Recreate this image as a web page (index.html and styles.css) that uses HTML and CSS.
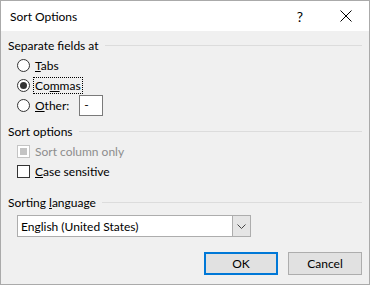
FILE: index.html
```html
<!DOCTYPE html>
<html lang="en">
<head>
    <meta charset="UTF-8">
    <title>Sort Options</title>
    <link rel="stylesheet" href="styles.css">
</head>
<body>
    <div class="window">
        <div class="titlebar">
            <span class="title">Sort Options</span>
            <div class="capbtn">?</div>
            <div class="capbtn">
                <svg width="12" height="12" viewBox="0 0 12 12">
                    <path d="M0.5 0.5 L11.5 11.5 M11.5 0.5 L0.5 11.5" stroke="#000" stroke-width="1" fill="none"/>
                </svg>
            </div>
        </div>
        <div class="content">
            <div class="group">
                <span>Separate fields at</span>
                <div class="rule"></div>
            </div>
            <div class="row">
                <span class="radio"></span>
                <span class="lbl"><u>T</u>abs</span>
            </div>
            <div class="row">
                <span class="radio on"></span>
                <span class="lbl focus">Co<u>m</u>mas</span>
            </div>
            <div class="row other">
                <span class="radio"></span>
                <span class="lbl"><u>O</u>ther:</span>
                <span class="textbox">-</span>
            </div>

            <div class="group g2">
                <span>Sort options</span>
                <div class="rule"></div>
            </div>
            <div class="row">
                <span class="check off"></span>
                <span class="lbl dim">Sort column only</span>
            </div>
            <div class="row">
                <span class="check"></span>
                <span class="lbl"><u>C</u>ase sensitive</span>
            </div>

            <div class="group g3">
                <span>Sorting <u>l</u>anguage</span>
                <div class="rule"></div>
            </div>
            <div class="select">
                <span class="value">English (United States)</span>
                <span class="arrow">
                    <svg width="9" height="5" viewBox="0 0 9 5">
                        <path d="M0.5 0.5 L4.5 4.5 L8.5 0.5" stroke="#444" stroke-width="1" fill="none"/>
                    </svg>
                </span>
            </div>

            <div class="buttons">
                <div class="btn default">OK</div>
                <div class="btn">Cancel</div>
            </div>
        </div>
    </div>
</body>
</html>
```

FILE: styles.css
```css
body{
    margin: 0;
    font-family: Lato, 'Noto Sans', sans-serif;
    font-size: 12px;
    color: #000;
}

.window{
    width: 370px;
    height: 285px;
    box-sizing: border-box;
    border: 1px solid #aaaaaa;
    background-color: #f0f0f0;
    display: flex;
    flex-direction: column;
}

.titlebar{
    height: 30px;
    background-color: #fff;
    display: flex;
    align-items: center;
    padding-left: 9px;
}
.title{
    flex: 1;
}
.capbtn{
    width: 46px;
    height: 30px;
    display: flex;
    align-items: center;
    justify-content: center;
    font-size: 14px;
}

.content{
    flex: 1;
    padding: 4px 7px 0 7px;
}

.group{
    height: 20px;
    display: flex;
    align-items: center;
}
.group .rule{
    flex: 1;
    height: 1px;
    background-color: #dcdcdc;
    margin-left: 6px;
}
.g2{
    margin-top: 6px;
}
.g3{
    margin-top: 11px;
}

.row{
    height: 20px;
    display: flex;
    align-items: center;
    padding-left: 9px;
}

.radio{
    width: 11px;
    height: 11px;
    border: 1px solid #333;
    border-radius: 50%;
    background-color: #fff;
    display: flex;
    align-items: center;
    justify-content: center;
}
.radio.on::after{
    content: '';
    width: 7px;
    height: 7px;
    border-radius: 50%;
    background-color: #333;
}

.check{
    width: 11px;
    height: 11px;
    border: 1px solid #333;
    background-color: #fff;
    display: flex;
    align-items: center;
    justify-content: center;
}
.check.off{
    border-color: #c4c4c4;
}
.check.off::after{
    content: '';
    width: 7px;
    height: 7px;
    background-color: #c4c4c4;
}

.lbl{
    margin-left: 4px;
    padding: 0 1px;
}
.lbl.focus{
    outline: 1px dotted #000;
}
.lbl.dim{
    color: #8d8d8d;
}

.textbox{
    margin-left: 9px;
    width: 18px;
    height: 19px;
    border: 1px solid #7a7a7a;
    background-color: #fff;
    padding-left: 4px;
    line-height: 18px;
}

.select{
    margin: 3px 0 0 9px;
    width: 232px;
    height: 20px;
    border: 1px solid #adadad;
    background-color: #fff;
    display: flex;
    align-items: center;
}
.select .value{
    flex: 1;
    padding-left: 3px;
}
.select .arrow{
    width: 17px;
    height: 20px;
    background-color: #e5e5e5;
    border-left: 1px solid #adadad;
    display: flex;
    align-items: center;
    justify-content: center;
}

.buttons{
    margin-top: 15px;
    display: flex;
    justify-content: flex-end;
    gap: 10px;
}
.btn{
    width: 72px;
    height: 21px;
    border: 1px solid #adadad;
    background-color: #e1e1e1;
    display: flex;
    align-items: center;
    justify-content: center;
}
.btn.default{
    border: 2px solid #0078d7;
    width: 70px;
    height: 19px;
}
```
